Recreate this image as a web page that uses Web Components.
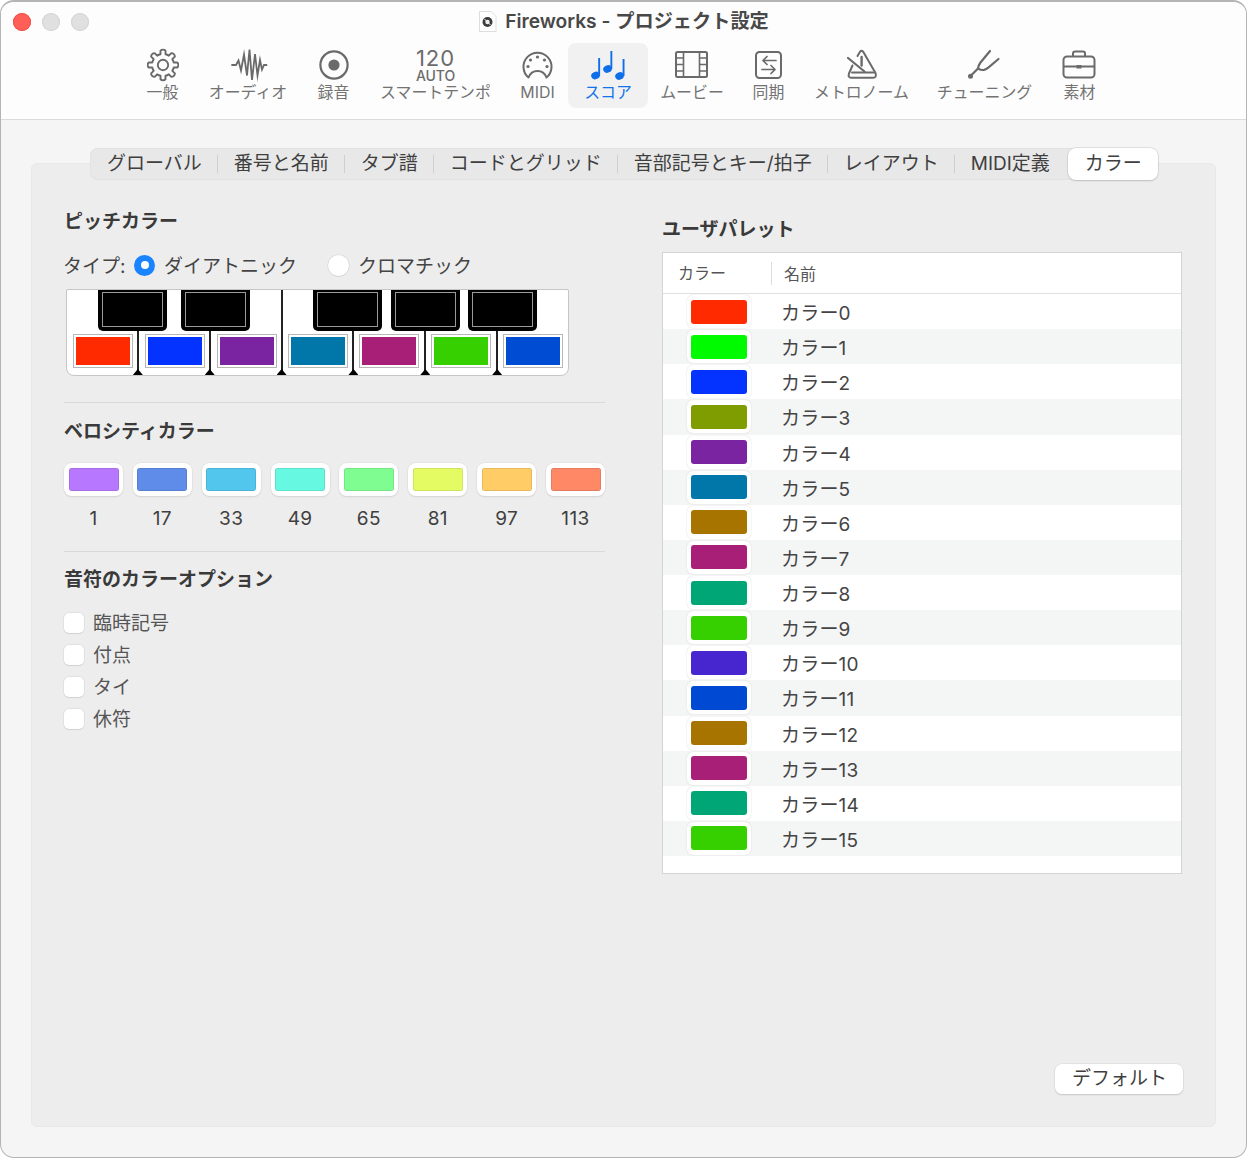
<!DOCTYPE html>
<html lang="ja">
<head>
<meta charset="utf-8">
<title>Fireworks - プロジェクト設定</title>
<style>
html,body{margin:0;padding:0;background:#fff}
body{font-family:"Inter","Noto Sans CJK JP",sans-serif;color:#3c3c3c;font-size:19px}
</style>
</head>
<body>
<x-window>
  <x-titlebar slot="top" title-text="Fireworks - プロジェクト設定">
    <x-tool style="width:61px"><x-gear slot="icon"></x-gear>一般</x-tool>
    <x-tool style="width:110px"><svg slot="icon" viewBox="208 48 80 34" width="80" height="34" fill="none" stroke="#6a6a6a" stroke-width="1.800" stroke-linecap="round" stroke-linejoin="miter" stroke-miterlimit="8" style="overflow:visible"><path d="M232 65H236L238.500 60.500L241 70.500L244 54.500L247 75.500L249.500 49.500L252 80L255 54L257.500 75.500L260 60L262 69.500L264 65H266.500"/></svg>オーディオ</x-tool>
    <x-tool style="width:61px"><svg slot="icon" viewBox="318 48 32 34" width="32" height="34" fill="none" stroke="#6a6a6a"><circle cx="334" cy="65" r="13.600" stroke-width="2.200"/><circle cx="334" cy="65" r="5.600" fill="#6a6a6a" stroke="none"/></svg>録音</x-tool>
    <x-tool style="width:143px"><x-tempo slot="icon"></x-tempo>スマートテンポ</x-tool>
    <x-tool style="width:61px"><svg slot="icon" viewBox="520 48 35 34" width="35" height="34" fill="none" stroke="#6a6a6a" stroke-width="2"><path d="M528.500 77.500A14 14 0 1 1 546.500 77.500C545 73.500 542 71 537.500 71S530 73.500 528.500 77.500Z" stroke-linejoin="round"/><g fill="#6a6a6a" stroke="none"><circle cx="537.500" cy="57" r="1.600"/><circle cx="530.500" cy="60" r="1.600"/><circle cx="544.500" cy="60" r="1.600"/><circle cx="528" cy="66.500" r="1.600"/><circle cx="547" cy="66.500" r="1.600"/></g></svg>MIDI</x-tool>
    <x-tool active style="width:80px"><svg slot="icon" viewBox="585 48 46 34" width="46" height="34" fill="#0f6fe8" stroke="none"><ellipse cx="595.500" cy="75.500" rx="4.400" ry="3.700" transform="rotate(-25 595.500 75.500)"/><rect x="598.200" y="58" width="1.900" height="18"/><ellipse cx="607.500" cy="69" rx="4.400" ry="3.700" transform="rotate(-25 607.500 69)"/><rect x="610.400" y="51" width="1.900" height="18"/><ellipse cx="619.500" cy="76" rx="4.400" ry="3.700" transform="rotate(-25 619.500 76)"/><rect x="622.600" y="59" width="1.900" height="17"/></svg>スコア</x-tool>
    <x-tool style="width:88px"><svg slot="icon" viewBox="661 48 62 34" width="62" height="34" fill="none" stroke="#6a6a6a" stroke-width="2"><rect x="676" y="52" width="31" height="25" rx="1.500"/><path d="M683.500 52v25M699.500 52v25M676 58h7.500M676 64.500h7.500M676 71h7.500M699.500 58h7.500M699.500 64.500h7.500M699.500 71h7.500" stroke-width="1.600"/></svg>ムービー</x-tool>
    <x-tool style="width:65px"><svg slot="icon" viewBox="753 48 31 34" width="31" height="34" fill="none" stroke="#6a6a6a" stroke-width="2" stroke-linecap="round" stroke-linejoin="round"><rect x="756" y="52" width="25" height="26" rx="3.500"/><path d="M776 60.500h-13M767 56.500l-4 4 4 4M762 69.500h13M771 65.500l4 4-4 4" stroke-width="1.700"/></svg>同期</x-tool>
    <x-tool style="width:121px"><svg slot="icon" viewBox="814 48 95 34" width="95" height="34" fill="none" stroke="#6a6a6a" stroke-width="2" stroke-linecap="round" stroke-linejoin="round"><path d="M857.500 56L860 51.800Q861.600 49.800 863.200 51.800L875.500 73Q877 77.800 873 77.800H852Q847.500 77.800 849 73.500L852.500 65.500"/><path d="M852 72.500H874.500"/><path d="M848 58L864.500 71.500" stroke-width="2.200"/><path d="M861.600 57V65.500" stroke-width="2.400"/></svg>メトロノーム</x-tool>
    <x-tool style="width:125px"><svg slot="icon" viewBox="938 48 93 34" width="93" height="34" fill="none" stroke="#6a6a6a" stroke-width="2.200" stroke-linecap="round" stroke-linejoin="round"><path d="M990 51L980.500 62.500Q978 66 978 68.500Q980 70.500 984 69.800Q986.500 69.300 988 67.800L998.500 59"/><path d="M978 68.500L971.500 75"/><circle cx="970.500" cy="76.300" r="2.500" fill="#6a6a6a" stroke="none"/></svg>チューニング</x-tool>
    <x-tool style="width:65px"><svg slot="icon" viewBox="1064 48 31 34" width="31" height="34" fill="none" stroke="#6a6a6a" stroke-width="2" stroke-linejoin="round" style="overflow:visible"><rect x="1063.500" y="56.500" width="31" height="21" rx="3.500"/><path d="M1073 56v-2.500a2 2 0 0 1 2-2h8a2 2 0 0 1 2 2V56M1064 66.500h30"/><rect x="1076.500" y="65" width="5" height="3.500" fill="#6a6a6a" stroke="none"/></svg>素材</x-tool>
  </x-titlebar>

  <x-tabs>
    <x-tab>グローバル</x-tab><x-sep></x-sep>
    <x-tab>番号と名前</x-tab><x-sep></x-sep>
    <x-tab>タブ譜</x-tab><x-sep></x-sep>
    <x-tab>コードとグリッド</x-tab><x-sep></x-sep>
    <x-tab>音部記号とキー/拍子</x-tab><x-sep></x-sep>
    <x-tab>レイアウト</x-tab><x-sep></x-sep>
    <x-tab>MIDI定義</x-tab>
    <x-tab active>カラー</x-tab>
  </x-tabs>

  <x-panel>
    <x-heading>ピッチカラー</x-heading>
    <x-type-row>
      <span slot="label">タイプ:</span>
      <x-radio slot="a" checked>ダイアトニック</x-radio>
      <x-radio slot="b">クロマチック</x-radio>
    </x-type-row>
    <x-keyboard></x-keyboard>
    <x-rule style="margin-top:26px"></x-rule>
    <x-heading style="margin-top:16px">ベロシティカラー</x-heading>
    <x-velocity>
      <x-vel color="#b877ff">1</x-vel>
      <x-vel color="#5f8ce8">17</x-vel>
      <x-vel color="#52c6ec">33</x-vel>
      <x-vel color="#66f8e0">49</x-vel>
      <x-vel color="#80fd90">65</x-vel>
      <x-vel color="#e4fb64">81</x-vel>
      <x-vel color="#ffcc66">97</x-vel>
      <x-vel color="#ff8866">113</x-vel>
    </x-velocity>
    <x-rule style="margin-top:20px"></x-rule>
    <x-heading style="margin-top:15px">音符のカラーオプション</x-heading>
    <x-checks>
      <x-check>臨時記号</x-check>
      <x-check>付点</x-check>
      <x-check>タイ</x-check>
      <x-check>休符</x-check>
    </x-checks>

    <x-heading slot="right" style="margin-top:8px">ユーザパレット</x-heading>
    <x-palette slot="right">
      <x-row color="#ff2a00">カラー0</x-row>
      <x-row color="#00fb00">カラー1</x-row>
      <x-row color="#0433ff">カラー2</x-row>
      <x-row color="#7f9c00">カラー3</x-row>
      <x-row color="#7a24a2">カラー4</x-row>
      <x-row color="#0077a8">カラー5</x-row>
      <x-row color="#a77400">カラー6</x-row>
      <x-row color="#a81f77">カラー7</x-row>
      <x-row color="#00a676">カラー8</x-row>
      <x-row color="#36cf00">カラー9</x-row>
      <x-row color="#4726d0">カラー10</x-row>
      <x-row color="#0049d3">カラー11</x-row>
      <x-row color="#a77400">カラー12</x-row>
      <x-row color="#a81f77">カラー13</x-row>
      <x-row color="#00a676">カラー14</x-row>
      <x-row color="#36cf00">カラー15</x-row>
    </x-palette>
    <x-button slot="footer">デフォルト</x-button>
  </x-panel>
</x-window>

<script>
function def(name, css, html, extra){
  const tpl=document.createElement('template');
  tpl.innerHTML='<style>'+css+'</style>'+html;
  customElements.define(name,class extends HTMLElement{
    constructor(){super();this.attachShadow({mode:'open'}).appendChild(tpl.content.cloneNode(true));}
    connectedCallback(){if(extra)extra.call(this,this.shadowRoot);}
  });
}
const FONT='"Inter","Noto Sans CJK JP",sans-serif';

def('x-window',`:host{display:flex;flex-direction:column;box-sizing:border-box;width:1247px;height:1158px;border:1px solid #b4b4b4;border-top-width:2px;border-radius:14px;background:#f5f5f5;overflow:hidden;font-family:${FONT}}
.main{flex:1;display:flex;flex-direction:column;padding:28px 30px 30px 30px;min-height:0}`,
`<slot name="top"></slot><div class="main"><slot></slot></div>`);

def('x-titlebar',`:host{display:block;background:#fdfdfd;border-bottom:1px solid #dcdcdc;height:117px;box-sizing:content-box}
.bar{display:grid;grid-template-columns:1fr auto 1fr;align-items:center;height:41px;box-sizing:border-box;padding-bottom:2px}
.lights{display:flex;gap:11px;padding-left:12px}
.lights i{width:18px;height:18px;border-radius:50%;background:#e0e0e0;box-shadow:inset 0 0 0 1px #d4d4d4}
.lights i:first-child{background:#ff5f57;box-shadow:inset 0 0 0 1px #ee5048}
.title{display:flex;align-items:center;gap:8px;font-size:19.200px;font-weight:600;color:#484848;line-height:24px}
.title span{padding-bottom:2px}
.doc{width:19px;height:21px;display:block}
.tools{display:flex;padding-left:131px}`,
`<div class="bar"><div class="lights"><i></i><i></i><i></i></div>
<div class="title"><svg class="doc" viewBox="0 0 19 21"><path d="M1.500 .5H13L18 5.500V20.500H1.500Z" fill="#fff" stroke="#dddddd"/><circle cx="9.500" cy="11" r="5" fill="#3c3c3c"/><circle cx="9.500" cy="11" r="2.200" fill="#eee"/><path d="M6.500 8l6 6" stroke="#eee"/></svg><span id="t"></span></div><div></div></div>
<div class="tools"><slot></slot></div>`,function(r){r.getElementById('t').textContent=this.getAttribute('title-text');});

def('x-tool',`:host{display:flex;flex-direction:column;align-items:center;box-sizing:border-box;height:65px;padding:5px 0 0;font-size:15.900px;line-height:20px;color:#737373;white-space:nowrap;border-radius:8px;flex:none}
:host([active]){background:#f1f1f1;color:#1273ea}
.i{height:35px;display:flex;justify-content:center;width:100%}
.l{height:20px}`,
`<div class="i"><slot name="icon"></slot></div><div class="l"><slot></slot></div>`);

def('x-gear',`:host{display:block;width:32px;height:34px}svg{display:block}`,
`<svg viewBox="0 0 32 34" width="32" height="34" fill="none" stroke="#6a6a6a" stroke-width="1.900" stroke-linejoin="round"><path id="p"/><circle cx="16" cy="17" r="5.200"/></svg>`,
function(r){
  const cx=16,cy=17,ro=15,ri=11;let d='';
  const pt=(rad,deg)=>{const a=(deg-90)*Math.PI/180;return (cx+rad*Math.cos(a)).toFixed(2)+' '+(cy+rad*Math.sin(a)).toFixed(2);};
  for(let i=0;i<8;i++){const a=i*45;
    d+=(i?'A'+ri+' '+ri+' 0 0 1 ':'M')+pt(ri,a-13);
    d+='L'+pt(ro-.5,a-10)+'A3.500 3.500 0 0 1 '+pt(ro-.5,a+10)+'L'+pt(ri,a+13);
  }
  d+='A'+ri+' '+ri+' 0 0 1 '+pt(ri,-13)+'Z';
  r.getElementById('p').setAttribute('d',d);
});

def('x-tempo',`:host{display:flex;flex-direction:column;align-items:center;color:#6c6c6c;width:111px}
.a{font-size:22px;line-height:20px;height:20px;letter-spacing:.9px}
.b{font-size:14px;line-height:15px;font-weight:500;letter-spacing:-.1px}`,
`<div class="a">120</div><div class="b">AUTO</div>`);

def('x-tabs',`:host{display:flex;align-items:center;align-self:flex-start;position:relative;z-index:1;box-sizing:border-box;height:32px;margin:0 0 -17px 59px;background:#e8e8e8;border-radius:8px;box-shadow:inset 0 0 0 1px #e2e2e2;padding-left:1px;font-size:19px}`,`<slot></slot>`);
def('x-tab',`:host{display:flex;align-items:center;height:32px;padding:0 15.500px;color:#3f3f3f;white-space:nowrap;box-sizing:border-box;line-height:24px}
:host(:first-child){padding-left:16px}
:host([active]){background:#fff;border-radius:8px;box-shadow:0 0 0 .5px #c8c8c8,0 1px 1.500px #bdbdbd;padding:0;width:90px;justify-content:center;margin-left:3px}`,`<slot></slot>`);
def('x-sep',`:host{display:block;width:1px;height:18px;background:#cfcfcf}`,``);

def('x-panel',`:host{flex:1;display:flex;flex-direction:column;box-sizing:border-box;min-height:0;background:#ededed;border:1px solid #e8e8e8;border-radius:6px;padding:45px 33px 32px 32px}
.cols{flex:1;display:grid;grid-template-columns:541px 520px;column-gap:57px;min-height:0;align-content:start}
.col{display:block}
.foot{display:flex;justify-content:flex-end}`,
`<div class="cols"><div class="col"><slot></slot></div><div class="col"><slot name="right"></slot></div></div><div class="foot"><slot name="footer"></slot></div>`);

def('x-heading',`:host{display:block;box-sizing:border-box;height:22px;font-size:19px;line-height:22px;padding-top:2px;font-weight:600;color:#3a3a3a;white-space:nowrap}`,`<slot></slot>`);

def('x-type-row',`:host{display:flex;align-items:center;height:24px;margin-top:22px;font-size:19px;color:#444;line-height:24px}
.g1{display:flex;align-items:center;padding-top:3px;box-sizing:border-box;margin-left:-1px;flex:none;width:71px}.g2{width:194px;display:flex;align-items:center}.g3{display:flex;align-items:center}`,
`<div class="g1"><slot name="label"></slot></div><div class="g2"><slot name="a"></slot></div><div class="g3"><slot name="b"></slot></div>`);

def('x-radio',`:host{display:flex;align-items:center;gap:9px;white-space:nowrap}
.r{width:21px;height:21px;border-radius:50%;background:#fff;box-shadow:0 0 0 .5px #d4d4d4,0 .5px 1px #ccc;display:flex;align-items:center;justify-content:center;flex:none}
:host([checked]) .r{background:#1a84ff;box-shadow:none}
:host([checked]) .r::after{content:"";width:8px;height:8px;border-radius:50%;background:#fff}
.t{padding-top:3px}`,
`<span class="r"></span><span class="t"><slot></slot></span>`);

const keyColors=['#ff2a00','#0433ff','#7a24a2','#0077a8','#a81f77','#36cf00','#004dd3'];
def('x-keyboard',`:host{display:block;box-sizing:border-box;width:503px;height:87px;margin:12px 0 0 2px;background:#fff;border:1px solid #c6c6c6;border-radius:2px 2px 8px 8px;overflow:hidden}
.blacks{display:flex;height:41px}
.b{width:69px;height:41px;box-sizing:border-box;background:#000;border-radius:0 0 5px 5px;padding:2px 4px 4px;flex:none}
.b i{display:block;height:100%;box-sizing:border-box;border:1px solid #9a9a9a}
.line{width:2px;background:#222;flex:none}
.whites{display:flex;height:44px}
.w{flex:1 1 0;min-width:0;display:flex;justify-content:center;padding-top:3px;box-sizing:border-box}
.sw{width:60px;height:34px;box-sizing:border-box;border:1px solid #b8b8b8;padding:2px;background:#fff;flex:none}
.sw i{display:block;height:100%}
.s{width:2px;background:#222;position:relative;flex:none}
.s::after{content:"";position:absolute;left:-4px;bottom:0;width:10px;height:6px;background:#000;clip-path:polygon(50% 0,100% 100%,0 100%)}`,
`<div class="blacks">
<div class="b" style="margin-left:31px"><i></i></div><div class="b" style="margin-left:14px"><i></i></div>
<div class="line" style="margin-left:31px"></div>
<div class="b" style="margin-left:30px"><i></i></div><div class="b" style="margin-left:9px"><i></i></div><div class="b" style="margin-left:8px"><i></i></div>
</div><div class="whites">`+keyColors.map((c,i)=>`${i?'<div class="s"></div>':''}<div class="w"><div class="sw"${i<3?' style="margin-left:2px"':''}><i style="background:${c}"></i></div></div>`).join('')+`</div>`);

def('x-rule',`:host{display:block;height:1px;background:#d9d9d9;margin-top:27px}`,``);

def('x-velocity',`:host{display:grid;grid-template-columns:repeat(8,59px);column-gap:9.860px;margin-top:22px}`,`<slot></slot>`);
def('x-vel',`:host{display:flex;flex-direction:column;align-items:center;font-size:19px;letter-spacing:.4px;line-height:24px;color:#3f3f3f}
.o{box-sizing:border-box;width:59px;height:33px;background:#fff;border-radius:8px;box-shadow:0 0 0 .5px #dcdcdc,0 1px 1.500px #cfcfcf;padding:5px 4.500px;margin-bottom:11px}
.o i{display:block;height:100%;border-radius:3px;box-shadow:inset 0 0 0 .5px rgba(0,0,0,.18)}`,
`<div class="o"><i id="c"></i></div><slot></slot>`,function(r){r.getElementById('c').style.background=this.getAttribute('color');});

def('x-checks',`:host{display:flex;flex-direction:column;gap:12px;margin-top:24px}`,`<slot></slot>`);
def('x-check',`:host{display:flex;align-items:center;gap:9px;height:20px;font-size:19px;color:#555;white-space:nowrap}
.c{width:20px;height:20px;box-sizing:border-box;background:#fff;border-radius:5px;box-shadow:0 0 0 .5px #d6d6d6,0 .5px 1px #d0d0d0;flex:none}
.t{padding-bottom:3px}`,
`<span class="c"></span><span class="t"><slot></slot></span>`);

def('x-palette',`:host{display:flex;flex-direction:column;box-sizing:border-box;height:622px;margin-top:13px;background:#fff;border:1px solid #d4d4d4}
.h{display:flex;align-items:center;height:40px;border-bottom:1px solid #e0e0e0;box-sizing:content-box;font-size:16px;color:#555}
.h .a{width:109px;padding-left:15px;box-sizing:border-box;height:23px;line-height:23px;border-right:1px solid #dedede}
.h .b{padding-left:12px}
::slotted(x-row:nth-child(even)){background:#f4f5f5}`,
`<div class="h"><div class="a">カラー</div><div class="b">名前</div></div><slot></slot>`);
def('x-row',`:host{display:flex;align-items:center;height:35.130px;font-size:19px;letter-spacing:.2px;color:#444;white-space:nowrap;flex:none}
.o{box-sizing:border-box;width:64px;height:33px;margin-left:24px;margin-right:30px;background:#fff;border-radius:6px;box-shadow:0 0 1.500px #d0d0d0;padding:4.500px 4px}
.o i{display:block;height:100%;border-radius:3px}`,
`<div class="o"><i id="c"></i></div><slot></slot>`,function(r){r.getElementById('c').style.background=this.getAttribute('color');});

def('x-button',`:host{display:flex;align-items:center;justify-content:center;box-sizing:border-box;width:128px;height:30px;margin-right:-1px;padding:0 0 5px 1px;background:#fff;border-radius:7px;box-shadow:0 0 0 .5px #d8d8d8,0 1px 1.500px #bebebe;font-size:19px;color:#3f3f3f;white-space:nowrap}`,`<slot></slot>`);
</script>
</body>
</html>
